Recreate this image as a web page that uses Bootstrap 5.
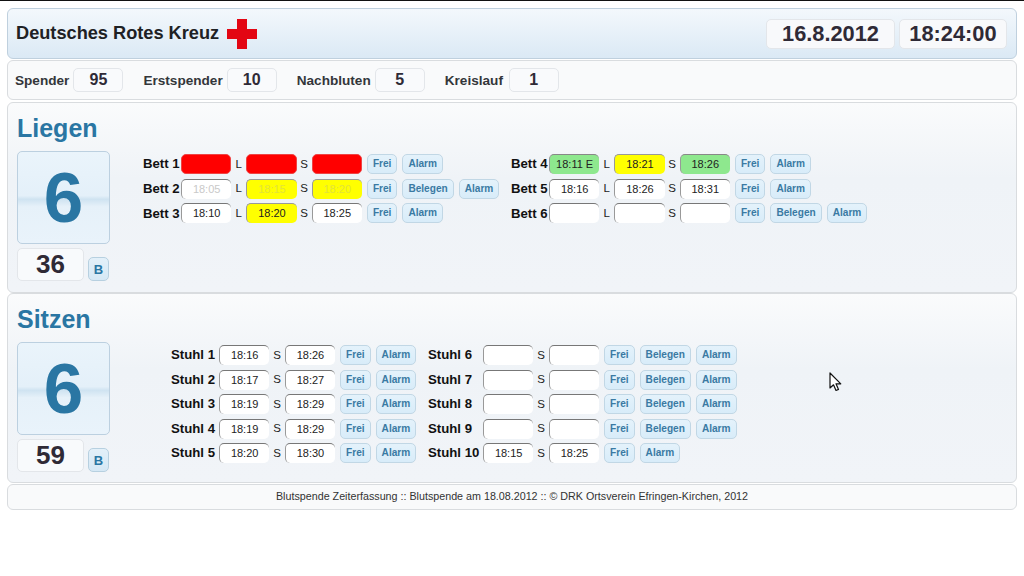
<!DOCTYPE html>
<html lang="de">
<head>
<meta charset="utf-8">
<title>Blutspende Zeiterfassung</title>
<link href="https://cdn.jsdelivr.net/npm/bootstrap@5.3.0/dist/css/bootstrap.min.css" rel="stylesheet">
<style>
html,body{background:#fff;}
body{font-family:"Liberation Sans",Arial,sans-serif;margin:0;padding:8px 7px 0;border-top:1px solid #111;color:#111;height:576px;overflow:hidden;position:relative;}
.bar{border:1px solid #d9dcdf;border-radius:6px;background:#f9fafb;}
.head-bar{height:51px;margin-top:-1px;padding:0 8px;background:linear-gradient(#f3f8fc,#dbe9f5);border-color:#bfd0de;}
.brand{font-size:18.2px;font-weight:700;color:#1e2124;margin-right:8px;}
.clock-box{height:30px;background:#f8f9fb;border:1px solid #e3e6ea;border-radius:5px;font-size:21.8px;font-weight:700;color:#2f2a36;line-height:28px;text-align:center;}
.clock-date{width:129px;margin-right:4px;}
.clock-time{width:108px;}
.head-bar .clock-wrap{margin-right:1px;}
.stat-bar{height:40px;margin-top:1px;padding:0 7px;font-size:13.6px;font-weight:700;color:#33363a;}
.stat-bar span{padding-top:2px;}
.stat-bar span.stat-k{width:60px;}
.stat-num{width:50px;height:24px;background:#f9fafc;border:1px solid #e3e6ea;border-radius:5px;font-size:16px;color:#2f2a36;line-height:22px;text-align:center;margin:0 20px 0 4px;}
.sec{height:191px;background:linear-gradient(#fafbfc,#eff3f7 40%,#f1f4f8);padding:0 9px;}
.sec-one{margin-top:2px;}
.sec-two{margin-top:0;height:190px;}
.sec-title{font-size:25px;font-weight:700;color:#2a76a3;line-height:30px;padding-top:10px;height:48px;}
.count-col{width:93px;flex:none;}
.big-count{height:93px;border:1px solid #bcd0e0;border-radius:5px;background:linear-gradient(#eaf4fb,#e4f0f9 48%,#cfe3f1 52%,#e6f1f9 60%,#e9f3fb);font-size:71px;font-weight:700;color:#2a76a3;line-height:91px;text-align:center;}
.sub-count{width:67px;height:33px;background:#f8fafc;border:1px solid #e3e6ea;border-radius:5px;font-size:26px;font-weight:700;color:#2f2a36;line-height:31px;text-align:center;}
.count-foot{margin-top:4px;}
.b-btn{width:21px;height:24px;margin-top:9px;margin-left:4px;background:linear-gradient(#e3f0f9,#d5e8f5);border:1px solid #b7d0e0;border-radius:5px;font-size:13px;font-weight:700;color:#2a76a3;line-height:23px;text-align:center;}
.beds{margin-left:33px;padding-top:1px;}
.seats{margin-left:61px;padding-top:1px;}
.grp-bed{width:368px;}
.grp-seat{width:257px;}
.slot-row{height:24.6px;}
.seats .slot-row{height:24.5px;}
.slot-name{font-size:13.2px;font-weight:700;color:#111;flex:none;white-space:nowrap;}
.beds .slot-name{width:38px;}
.seats .slot-name{width:48px;}
.seats .slot-name.slot-wide{width:55px;}
.tm{width:50.3px;height:20px;flex:none;background:#fff;border-radius:5px;border:0;border-top:1px solid #777;border-left:1px solid #999;font-size:11px;line-height:19px;text-align:center;color:#222;}
.tm.red{background:#f00;border:1px solid #e44;}
.tm.yel{background:#ff0;border-top-color:#999;}
.tm.grn{background:#8ee88e;border-top-color:#888;}
.tm.dim{color:#c9c9c9;}
.tm.yel.dim{color:#e3e33a;}
.sep{width:15px;flex:none;text-align:center;font-size:11.5px;color:#222;}
.seats .sep{width:15.5px;}
.act{height:20px;padding:0 5px;margin-left:5px;flex:none;background:linear-gradient(#e4f2fb,#d8ecf9);border:1px solid #c1d7e5;border-radius:5px;font-size:10.1px;font-weight:700;color:#3a7aa3;line-height:18px;}
.foot-bar{height:26px;margin-top:0;margin-top:1px;font-size:10.72px;color:#333;line-height:23px;text-align:center;}
.cursor{position:absolute;left:829px;top:371px;}
</style>
</head>
<body>
<div class="bar head-bar d-flex align-items-center">
  <span class="brand">Deutsches Rotes Kreuz</span>
  <svg width="30" height="30" viewBox="0 0 30 30"><path d="M10 0H20V10H30V20H20V30H10V20H0V10H10Z" fill="#e30613"/></svg>
  <div class="clock-wrap ms-auto d-flex"><div class="clock-box clock-date">16.8.2012</div><div class="clock-box clock-time">18:24:00</div></div>
</div>
<div class="bar stat-bar d-flex align-items-center">
  <span>Spender</span><div class="stat-num">95</div>
  <span>Erstspender</span><div class="stat-num">10</div>
  <span>Nachbluten</span><div class="stat-num">5</div>
  <span class="stat-k">Kreislauf</span><div class="stat-num">1</div>
</div>

<div class="bar sec sec-one">
  <div class="sec-title">Liegen</div>
  <div class="d-flex">
    <div class="count-col">
      <div class="big-count">6</div>
      <div class="d-flex count-foot"><div class="sub-count">36</div><div class="b-btn">B</div></div>
    </div>
    <div class="beds d-flex">
      <div class="grp-bed">
        <div class="slot-row d-flex align-items-center"><span class="slot-name">Bett 1</span><div class="tm red"></div><span class="sep">L</span><div class="tm red"></div><span class="sep">S</span><div class="tm red"></div><span class="act">Frei</span><span class="act">Alarm</span></div>
        <div class="slot-row d-flex align-items-center"><span class="slot-name">Bett 2</span><div class="tm dim">18:05</div><span class="sep">L</span><div class="tm yel dim">18:15</div><span class="sep">S</span><div class="tm yel dim">18:20</div><span class="act">Frei</span><span class="act">Belegen</span><span class="act">Alarm</span></div>
        <div class="slot-row d-flex align-items-center"><span class="slot-name">Bett 3</span><div class="tm">18:10</div><span class="sep">L</span><div class="tm yel">18:20</div><span class="sep">S</span><div class="tm">18:25</div><span class="act">Frei</span><span class="act">Alarm</span></div>
      </div>
      <div class="grp-bed">
        <div class="slot-row d-flex align-items-center"><span class="slot-name">Bett 4</span><div class="tm grn">18:11 E</div><span class="sep">L</span><div class="tm yel">18:21</div><span class="sep">S</span><div class="tm grn">18:26</div><span class="act">Frei</span><span class="act">Alarm</span></div>
        <div class="slot-row d-flex align-items-center"><span class="slot-name">Bett 5</span><div class="tm">18:16</div><span class="sep">L</span><div class="tm">18:26</div><span class="sep">S</span><div class="tm">18:31</div><span class="act">Frei</span><span class="act">Alarm</span></div>
        <div class="slot-row d-flex align-items-center"><span class="slot-name">Bett 6</span><div class="tm"></div><span class="sep">L</span><div class="tm"></div><span class="sep">S</span><div class="tm"></div><span class="act">Frei</span><span class="act">Belegen</span><span class="act">Alarm</span></div>
      </div>
    </div>
  </div>
</div>

<div class="bar sec sec-two">
  <div class="sec-title">Sitzen</div>
  <div class="d-flex">
    <div class="count-col">
      <div class="big-count">6</div>
      <div class="d-flex count-foot"><div class="sub-count">59</div><div class="b-btn">B</div></div>
    </div>
    <div class="seats d-flex">
      <div class="grp-seat">
        <div class="slot-row d-flex align-items-center"><span class="slot-name">Stuhl 1</span><div class="tm">18:16</div><span class="sep">S</span><div class="tm">18:26</div><span class="act">Frei</span><span class="act">Alarm</span></div>
        <div class="slot-row d-flex align-items-center"><span class="slot-name">Stuhl 2</span><div class="tm">18:17</div><span class="sep">S</span><div class="tm">18:27</div><span class="act">Frei</span><span class="act">Alarm</span></div>
        <div class="slot-row d-flex align-items-center"><span class="slot-name">Stuhl 3</span><div class="tm">18:19</div><span class="sep">S</span><div class="tm">18:29</div><span class="act">Frei</span><span class="act">Alarm</span></div>
        <div class="slot-row d-flex align-items-center"><span class="slot-name">Stuhl 4</span><div class="tm">18:19</div><span class="sep">S</span><div class="tm">18:29</div><span class="act">Frei</span><span class="act">Alarm</span></div>
        <div class="slot-row d-flex align-items-center"><span class="slot-name">Stuhl 5</span><div class="tm">18:20</div><span class="sep">S</span><div class="tm">18:30</div><span class="act">Frei</span><span class="act">Alarm</span></div>
      </div>
      <div class="grp-seat">
        <div class="slot-row d-flex align-items-center"><span class="slot-name slot-wide">Stuhl 6</span><div class="tm"></div><span class="sep">S</span><div class="tm"></div><span class="act">Frei</span><span class="act">Belegen</span><span class="act">Alarm</span></div>
        <div class="slot-row d-flex align-items-center"><span class="slot-name slot-wide">Stuhl 7</span><div class="tm"></div><span class="sep">S</span><div class="tm"></div><span class="act">Frei</span><span class="act">Belegen</span><span class="act">Alarm</span></div>
        <div class="slot-row d-flex align-items-center"><span class="slot-name slot-wide">Stuhl 8</span><div class="tm"></div><span class="sep">S</span><div class="tm"></div><span class="act">Frei</span><span class="act">Belegen</span><span class="act">Alarm</span></div>
        <div class="slot-row d-flex align-items-center"><span class="slot-name slot-wide">Stuhl 9</span><div class="tm"></div><span class="sep">S</span><div class="tm"></div><span class="act">Frei</span><span class="act">Belegen</span><span class="act">Alarm</span></div>
        <div class="slot-row d-flex align-items-center"><span class="slot-name slot-wide">Stuhl 10</span><div class="tm">18:15</div><span class="sep">S</span><div class="tm">18:25</div><span class="act">Frei</span><span class="act">Alarm</span></div>
      </div>
    </div>
  </div>
</div>
<div class="bar foot-bar">Blutspende Zeiterfassung :: Blutspende am 18.08.2012 :: © DRK Ortsverein Efringen-Kirchen, 2012</div>
<svg class="cursor" width="13" height="20" viewBox="0 0 13 20"><path d="M1 1V16L4.5 12.8L7 18.5L9.5 17.4L7 11.8H11.8Z" fill="#fff" stroke="#111" stroke-width="1.2" stroke-linejoin="round"/></svg>
</body>
</html>
